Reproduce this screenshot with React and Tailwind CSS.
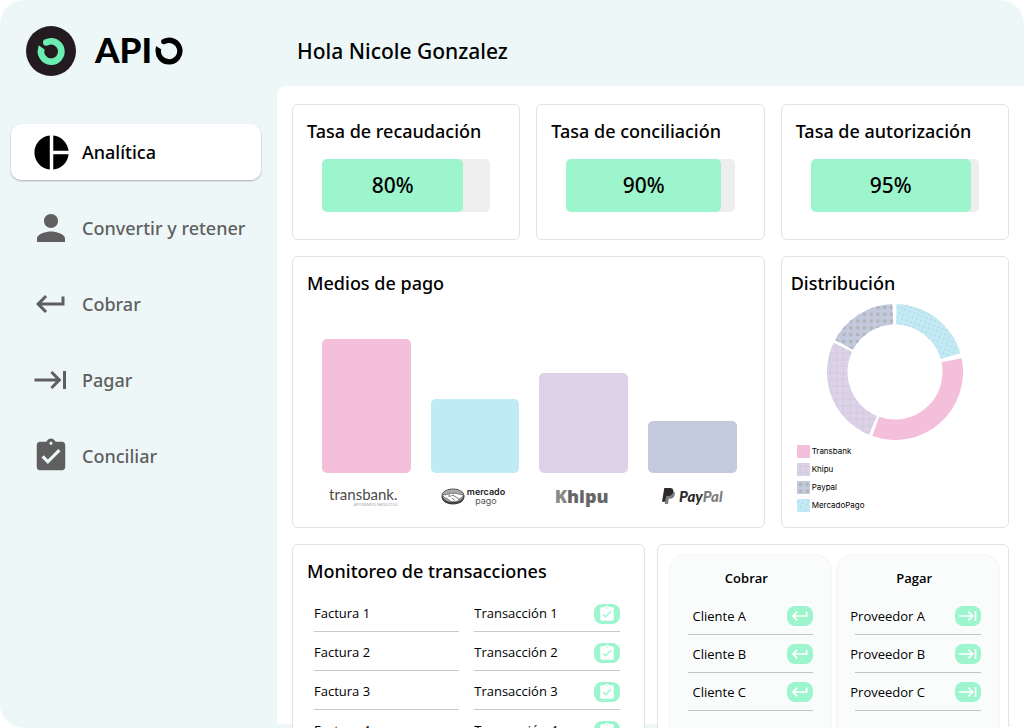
import {
    MdPieChart,
    MdPerson,
    MdKeyboardReturn,
    MdKeyboardTab,
    MdAssignmentTurnedIn,
} from 'react-icons/md';

const menu = [
    { label: 'Analítica', Icon: MdPieChart, size: 41, active: true },
    { label: 'Convertir y retener', Icon: MdPerson, size: 42 },
    { label: 'Cobrar', Icon: MdKeyboardReturn, size: 36 },
    { label: 'Pagar', Icon: MdKeyboardTab, size: 36 },
    { label: 'Conciliar', Icon: MdAssignmentTurnedIn, size: 38 },
];

const rates = [
    { title: 'Tasa de recaudación', value: 80, fill: 84 },
    { title: 'Tasa de conciliación', value: 90, fill: 92 },
    { title: 'Tasa de autorización', value: 95, fill: 95 },
];

const slices = [
    { from: 1.3, to: 74, fill: '#c0ebf4', pattern: 'url(#dots)' },
    { from: 78.3, to: 199.5, fill: '#f4bfdb' },
    { from: 202.5, to: 295.4, fill: '#ded2e8', pattern: 'url(#grid)' },
    { from: 298, to: 357.7, fill: '#c4cadd', pattern: 'url(#circles)' },
];

const legend = [
    { label: 'Transbank', fill: '#f4bfdb' },
    { label: 'Khipu', fill: '#ded2e8', pattern: 'url(#grid)' },
    { label: 'Paypal', fill: '#c4cadd', pattern: 'url(#circles)' },
    { label: 'MercadoPago', fill: '#c0ebf4', pattern: 'url(#dots)' },
];

const invoices = [1, 2, 3, 4];

const Card = ({ title, className = '', titleClass = 'pl-3.5', children }) => (
    <section className={`rounded-md border border-[#e3e3e3] bg-white ${className}`}>
        {title && (
            <h2 className={`pt-3.5 font-['Noto_Sans',sans-serif] text-lg leading-6 font-medium text-black ${titleClass}`}>
                {title}
            </h2>
        )}
        {children}
    </section>
);

const Badge = ({ Icon, size }) => (
    <span className="flex h-5 w-[26px] shrink-0 items-center justify-center rounded-lg bg-[#9df5cd] text-white">
        <Icon size={size} />
    </span>
);

const Logo = () => (
    <div className="flex items-start">
        <svg className="h-[50px] w-[50px]" viewBox="0 0 50 50">
            <circle cx="25" cy="25" r="25" fill="#231b20" />
            <path d="M20.5 16.4A10.2 10.2 0 1 1 15.4 22.5" fill="none" stroke="#6ceeb2" strokeWidth="6.6" />
            <circle cx="20.3" cy="16.5" r="3.3" fill="#6ceeb2" />
            <path d="M12.6 19.2 18.6 23.6 12 24.6Z" fill="#6ceeb2" />
        </svg>
        <span className="ml-[19px] font-['Lato',sans-serif] text-[35px] leading-[46px] font-black text-black">API</span>
        <svg className="mt-[11px] ml-[3px] h-7 w-7" viewBox="0 0 28 28">
            <path d="M9.2 4.4A10.8 10.8 0 1 1 3.5 11.8" fill="none" stroke="#000" strokeWidth="5.4" />
            <circle cx="8.8" cy="4.6" r="2.7" />
            <path d="M0.9 9 6.5 12.4 0.8 14Z" />
        </svg>
    </div>
);

const TransbankLogo = () => (
    <div className="flex flex-col items-end pr-1.5 font-['Lato',sans-serif] text-[#4a4a4a]">
        <span className="text-[15px] leading-4">transbank.</span>
        <span className="text-[4px] leading-[5px] text-[#a5a5a5]">APOYANDO NEGOCIOS</span>
    </div>
);

const MercadoLogo = () => (
    <div className="flex items-center gap-0.5 pr-1">
        <svg className="h-[17px] w-6" viewBox="0 0 24 17">
            <ellipse cx="12" cy="8.5" rx="11.5" ry="8" fill="#3f3f3f" />
            <ellipse cx="12" cy="7.6" rx="10.6" ry="6.4" fill="#a9a9a9" />
            <path d="M1.6 6.5C5 7.5 6.6 6 9 5.2c1.3-.4 2.6.5 4 .2 3-.6 5.5 1.6 9.3 1.3-.2 2-2 3.3-3.8 4-1 2-3 3-5 3.1-3 .3-5.5-1.2-7-3.1C4 10 1.9 8.8 1.6 6.5Z" fill="#fff" stroke="#555" strokeWidth=".7" />
            <path d="M9 5.3 7.6 8.2c1.6.9 3-.9 4.2-1.1l6 3.7M11 10l3 2.6" fill="none" stroke="#555" strokeWidth=".8" />
        </svg>
        <div className="flex flex-col items-center font-['Inter',sans-serif] text-[9px] leading-[9px]">
            <span className="font-semibold text-[#222]">mercado</span>
            <span className="text-[#555]">pago</span>
        </div>
    </div>
);

const KhipuLogo = () => (
    <span className="pr-1 font-['Open_Sans',sans-serif] text-[18px] leading-5 font-extrabold text-[#666]">
        <span className="text-[#8a8a8a]">K</span>hipu
    </span>
);

const PaypalLogo = () => (
    <div className="flex items-center gap-1">
        <svg className="h-4 w-[13px]" viewBox="0 0 13 16">
            <path d="M4.5 3H10c2.5 0 3.3 1.8 2.7 4-.7 2.8-2.5 3.8-5 3.8H6.8L6 16H2.8Z" fill="#7d7d7d" />
            <path d="M2.3 0H8c2.5 0 3.8 1.5 3.2 4-.7 2.8-2.5 4-5 4H4.3L3.3 13.7H0Z" fill="#2e2a2c" />
        </svg>
        <span className="font-['Lato',sans-serif] text-[15px] leading-5 font-black text-[#2e2a2c] italic">
            Pay<span className="text-[#7d7d7d]">Pal</span>
        </span>
    </div>
);

const payments = [
    { name: 'Transbank', amount: 134, color: 'bg-[#f4bfdb]', Brand: TransbankLogo },
    { name: 'MercadoPago', amount: 74, color: 'bg-[#c0ebf4]', Brand: MercadoLogo },
    { name: 'Khipu', amount: 100, color: 'bg-[#ded2e8]', Brand: KhipuLogo },
    { name: 'Paypal', amount: 52, color: 'bg-[#c4cadd]', Brand: PaypalLogo },
];

// angles in degrees, clockwise from the top
const point = (r, deg) => {
    const a = (deg * Math.PI) / 180;
    return `${68 + r * Math.sin(a)} ${68 - r * Math.cos(a)}`;
};

const slicePath = (from, to) => {
    const large = to - from > 180 ? 1 : 0;
    return `M${point(68, from)}A68 68 0 ${large} 1 ${point(68, to)}L${point(47.5, to)}A47.5 47.5 0 ${large} 0 ${point(47.5, from)}Z`;
};

const Donut = () => (
    <svg className="h-[136px] w-[136px]" viewBox="0 0 136 136">
        <defs>
            <pattern id="dots" width="4.6" height="4.6" patternUnits="userSpaceOnUse" patternTransform="rotate(20)">
                <circle cx="2" cy="2" r="0.6" fill="#c3a9cd" />
            </pattern>
            <pattern id="grid" width="6.6" height="6.6" patternUnits="userSpaceOnUse">
                <path d="M3 0V6.6M0 3H6.6" stroke="#b9c3cf" strokeWidth="0.8" strokeDasharray="1.2 1" />
            </pattern>
            <pattern id="circles" width="6.8" height="6.8" patternUnits="userSpaceOnUse">
                <circle cx="3.4" cy="3.4" r="1.9" fill="#b0b5bc" />
            </pattern>
        </defs>
        {slices.map((slice) => (
            <g key={slice.from}>
                <path d={slicePath(slice.from, slice.to)} fill={slice.fill} />
                {slice.pattern && <path d={slicePath(slice.from, slice.to)} fill={slice.pattern} />}
            </g>
        ))}
    </svg>
);

const PartyList = ({ title, names, Icon, size, labelClass }) => (
    <div className="flex-1 rounded-2xl bg-[#fafcfc] px-[18px] pt-[13px] shadow-[0_0_2px_rgba(0,0,0,0.12)]">
        <h3 className="mb-[9px] pr-2 text-center text-[13px] leading-5 font-semibold">{title}</h3>
        <ul>
            {names.map((name) => (
                <li key={name} className="flex h-[38px] items-center justify-between border-b border-[#c4c4c4]">
                    <span className={`text-[13px] leading-5 whitespace-nowrap ${labelClass}`}>{name}</span>
                    <Badge Icon={Icon} size={size} />
                </li>
            ))}
        </ul>
    </div>
);

const App = () => {
    return (
        <div className="flex h-screen overflow-hidden rounded-3xl bg-[#eef7f8] font-['Open_Sans',sans-serif] text-black">
            <aside className="w-[277px] shrink-0">
                <div className="pt-[26px] pl-[26px]">
                    <Logo />
                </div>
                <nav className="mt-12 mr-4 ml-[11px] flex flex-col gap-5">
                    {menu.map(({ label, Icon, size, active }) => (
                        <a
                            key={label}
                            href="#"
                            className={`flex h-14 items-center gap-2.5 rounded-[10px] pl-[19px] font-['Noto_Sans',sans-serif] text-lg font-medium ${
                                active ? 'bg-white text-black shadow-[0_1px_2px_rgba(0,0,0,0.3)]' : 'text-[#5f5f5f]'
                            }`}
                        >
                            <span className="flex w-[42px] justify-center">
                                <Icon size={size} />
                            </span>
                            {label}
                        </a>
                    ))}
                </nav>
            </aside>

            <div className="flex min-w-0 flex-1 flex-col pb-1">
                <header className="flex h-[86px] shrink-0 items-center pt-4 pl-5">
                    <h1 className="font-['Noto_Sans',sans-serif] text-[21px] leading-7 font-medium">Hola Nicole Gonzalez</h1>
                </header>

                <main className="min-h-0 flex-1 rounded-tl-lg bg-white px-[15px] pt-[18px]">
                    <div className="grid grid-cols-3 gap-4">
                        {rates.map((rate) => (
                            <Card key={rate.title} title={rate.title} className="h-[136px]">
                                <div className="mx-[29px] mt-4 h-[53px] rounded-[5px] bg-[#eeeeee]">
                                    <div
                                        className="flex h-full items-center justify-center rounded-[5px] bg-[#9df5cd] font-['Noto_Sans',sans-serif] text-[21px] font-medium"
                                        style={{ width: `${rate.fill}%` }}
                                    >
                                        {rate.value}%
                                    </div>
                                </div>
                            </Card>
                        ))}

                        <Card title="Medios de pago" className="col-span-2 h-[272px]">
                            <div className="mt-8 mr-[27px] ml-[29px] grid grid-cols-4 gap-5">
                                {payments.map(({ name, amount, color, Brand }) => (
                                    <div key={name}>
                                        <div className="flex h-[146px] items-end">
                                            <div className={`w-full rounded-[5px] ${color}`} style={{ height: amount }} />
                                        </div>
                                        <div className="mt-2.5 flex h-[26px] items-center justify-center">
                                            <Brand />
                                        </div>
                                    </div>
                                ))}
                            </div>
                        </Card>

                        <Card title="Distribución" className="h-[272px]" titleClass="pl-[9px]">
                            <div className="mt-[9px] flex justify-center">
                                <Donut />
                            </div>
                            <ul className="mt-[5px] ml-[15px] flex flex-col gap-[5px]">
                                {legend.map((item) => (
                                    <li key={item.label} className="flex items-center gap-0.5 font-['Inter',sans-serif] text-[8px] leading-[13px]">
                                        <svg className="h-[13px] w-[13px]" viewBox="0 0 13 13">
                                            <rect width="13" height="13" rx="1" fill={item.fill} />
                                            {item.pattern && <rect width="13" height="13" rx="1" fill={item.pattern} />}
                                        </svg>
                                        {item.label}
                                    </li>
                                ))}
                            </ul>
                        </Card>
                    </div>

                    <div className="mt-4 grid grid-cols-2 gap-3">
                        <Card title="Monitoreo de transacciones">
                            <div className="mt-2.5 pr-[9px] pl-1.5">
                                <table className="w-full table-fixed border-separate border-spacing-x-[15px] border-spacing-y-0">
                                    <tbody>
                                        {invoices.map((n) => (
                                            <tr key={n} className="h-[39px] text-[13px]">
                                                <td className="border-b border-[#c9c9c9] pt-1">Factura {n}</td>
                                                <td className="border-b border-[#c9c9c9] pt-1">
                                                    <div className="flex items-center justify-between">
                                                        Transacción {n}
                                                        <Badge Icon={MdAssignmentTurnedIn} size={18} />
                                                    </div>
                                                </td>
                                            </tr>
                                        ))}
                                    </tbody>
                                </table>
                            </div>
                        </Card>

                        <Card className="flex h-[260px] gap-1.5 pt-2.5 pr-[9px] pl-3">
                            <PartyList
                                title="Cobrar"
                                names={['Cliente A', 'Cliente B', 'Cliente C']}
                                Icon={MdKeyboardReturn}
                                size={20}
                                labelClass="ml-[5px]"
                            />
                            <PartyList
                                title="Pagar"
                                names={['Proveedor A', 'Proveedor B', 'Proveedor C']}
                                Icon={MdKeyboardTab}
                                size={20}
                                labelClass="-ml-[5px]"
                            />
                        </Card>
                    </div>
                </main>
            </div>
        </div>
    );
};

export default App;
